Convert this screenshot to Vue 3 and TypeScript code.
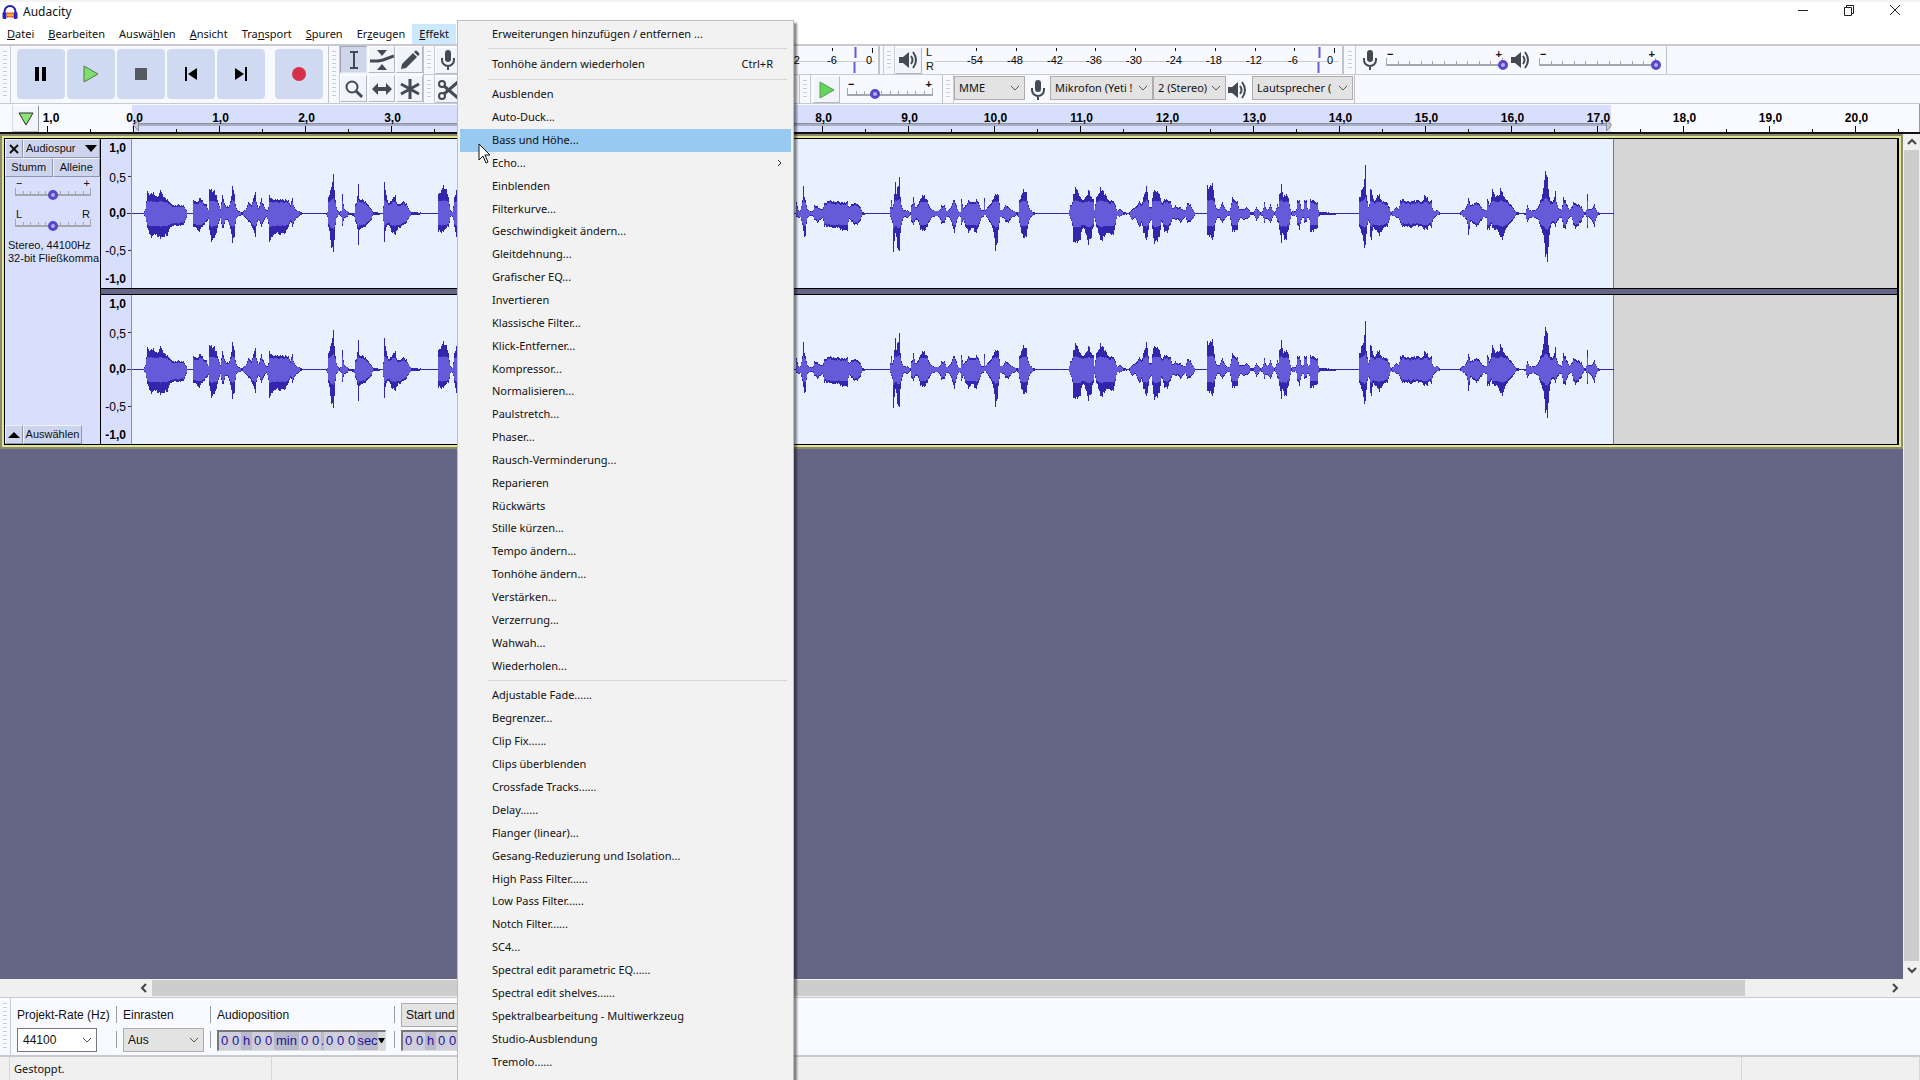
<script setup lang="ts">
interface MenuEntry {
  label: string
  shortcut?: string
  submenu?: boolean
  active?: boolean
}

const menus: [string, string, string][] = [
  ['', 'D', 'atei'],
  ['', 'B', 'earbeiten'],
  ['Auswä', 'h', 'len'],
  ['', 'A', 'nsicht'],
  ['Tra', 'n', 'sport'],
  ['', 'S', 'puren'],
  ['Er', 'z', 'eugen'],
  ['', 'E', 'ffekt'],
]

const toEntries = (labels: string[]): MenuEntry[] =>
  labels.map((label) => ({ label, submenu: label === 'Echo...', active: label === 'Bass und Höhe...' }))

const effectGroups: { name: string; entries: MenuEntry[] }[] = [
  { name: 'manage', entries: [{ label: 'Erweiterungen hinzufügen / entfernen ...' }] },
  { name: 'repeat', entries: [{ label: 'Tonhöhe ändern wiederholen', shortcut: 'Ctrl+R' }] },
  {
    name: 'builtin',
    entries: toEntries([
      'Ausblenden', 'Auto-Duck...', 'Bass und Höhe...', 'Echo...', 'Einblenden', 'Filterkurve...',
      'Geschwindigkeit ändern...', 'Gleitdehnung...', 'Grafischer EQ...', 'Invertieren',
      'Klassische Filter...', 'Klick-Entferner...', 'Kompressor...', 'Normalisieren...',
      'Paulstretch...', 'Phaser...', 'Rausch-Verminderung...', 'Reparieren', 'Rückwärts',
      'Stille kürzen...', 'Tempo ändern...', 'Tonhöhe ändern...', 'Verstärken...', 'Verzerrung...',
      'Wahwah...', 'Wiederholen...',
    ]),
  },
  {
    name: 'plugins',
    entries: toEntries([
      'Adjustable Fade......', 'Begrenzer...', 'Clip Fix......', 'Clips überblenden',
      'Crossfade Tracks......', 'Delay......', 'Flanger (linear)...',
      'Gesang-Reduzierung und Isolation...', 'High Pass Filter......', 'Low Pass Filter......',
      'Notch Filter......', 'SC4...', 'Spectral edit parametric EQ......',
      'Spectral edit shelves......', 'Spektralbearbeitung - Multiwerkzeug', 'Studio-Ausblendung',
      'Tremolo......', 'Vocal Remover......',
    ]),
  },
]

// Timeline: pixel position of a second, measured from the ruler's left edge.
const secondX = (s: number) => Math.round(94 + s * 86.12) + 0.5
const rulerMarks = Array.from({ length: 22 }, (_, i) => i - 1).map((s) => ({
  x: secondX(s),
  half: secondX(s + 0.5),
  label: `${Math.abs(s)},0`,
  labelX: s < 0 ? 12 : secondX(s) + 1,
}))

const meterMarks = [-54, -48, -42, -36, -30, -24, -18, -12, -6, 0].map((db, i) => ({
  db,
  x: Math.round(41 + i * 39.8),
}))

const scaleMarks = [
  { y: 9, label: '1,0', bold: true },
  { y: 39, label: '0,5', bold: false },
  { y: 74, label: '0,0', bold: true },
  { y: 112, label: '-0,5', bold: false },
  { y: 140, label: '-1,0', bold: true },
]

// Peak envelope as "position,up,down" in thirds of a pixel, per section of the clip.
const sections: [number, string][] = [
  [0, '396,1,1 415,3,3 430,3,3 435,15,12 441,67,45 452,62,75 460,64,65 470,50,70 481,72,78 492,50,70 500,45,68 512,30,40 520,25,38 535,28,38 550,25,35 557,10,15 560,3,3 578,3,3 580,42,40 590,35,50 598,47,57 605,42,40 612,30,35 618,28,25 624,12,18 627,75,50 633,75,85 642,70,75 648,55,60 655,30,30 660,15,15 665,55,45 669,45,45 675,25,20 685,20,25 692,50,60 697,82,90 702,60,70 706,20,20 712,8,10 725,5,5 735,12,15 745,35,25 752,25,35 758,45,50 764,65,70 770,25,25 775,15,20 782,47,40 790,25,25 797,10,10 803,10,20 808,57,85 815,45,70 825,45,62 840,45,65 855,43,60 865,42,40 870,25,25 875,47,40 880,25,30 888,10,15 895,8,10 905,3,3 935,3,3 975,2,2 982,5,10 985,50,40 990,70,80 994,80,105 998,120,115 1002,70,80 1007,20,15 1015,5,5 1024,8,10 1027,60,38 1030,15,18 1040,8,10 1045,3,3 1062,3,10 1066,30,25 1070,40,40 1074,90,95 1077,45,50 1085,45,45 1095,38,40 1105,25,30 1112,15,20 1117,5,5 1148,2,3 1152,95,85 1157,55,40 1165,30,35 1175,45,60 1184,55,65 1190,30,50 1200,30,45 1208,38,35 1217,32,30 1225,15,15 1235,4,4 1312,2,2 1315,60,55 1322,70,60 1330,85,55 1338,75,45 1345,45,40 1350,10,10 1357,5,10 1362,50,40 1367,70,70 1371,68,60 1380,20,20'],
  [780, '45,2,2 49,35,10 53,10,15 60,10,12 66,40,35 68,82,50 71,50,70 75,40,68 80,15,15 88,8,8 98,8,8 103,25,20 112,22,28 120,15,20 127,15,15 133,32,40 142,38,42 150,42,42 160,37,45 172,38,45 185,35,52 200,38,52 206,20,15 212,28,25 222,32,35 232,30,35 240,20,22 245,6,6 255,2,3 328,2,3 332,40,20 337,15,30 340,30,115 344,95,60 346,20,15 349,60,70 352,80,105 356,110,112 360,50,60 364,20,30 370,10,10 380,10,15 390,5,5 394,25,25 400,50,35 404,20,20 412,25,20 420,45,50 427,55,53 433,55,52 440,42,40 447,22,25 455,12,12 470,8,8 478,10,15 484,25,32 492,25,28 498,8,12 505,10,10 512,20,25 518,42,45 522,42,60 528,25,30 533,8,10 540,5,10 544,45,35 548,15,20 555,25,40 565,42,58 575,35,45 583,35,55 588,45,60 595,35,40 603,10,15 609,10,10 611,48,5 614,8,5 620,20,15 630,30,30 636,40,45 641,52,70 646,60,112 650,60,90 654,55,50 660,12,12 670,15,15 676,27,25 685,20,28 693,12,15 702,8,10 708,5,5 715,5,10 718,40,30 722,55,60 730,75,75 738,65,70 742,35,40 748,15,18 756,6,8 765,3,3 800,3,3 820,2,2 865,2,3 869,25,15 875,30,30 880,60,85 886,80,90 892,70,90 900,50,80 907,40,40 915,50,60 925,72,95 932,50,75 938,45,40 942,12,15 948,50,40 955,60,60 960,80,80 967,70,82 975,60,65 985,40,60 993,42,65 1000,38,65 1005,25,35 1010,8,8 1018,15,10 1030,4,4 1045,3,3 1055,15,20 1065,20,15 1073,30,35 1078,38,42 1084,28,30 1090,50,60 1097,82,80 1102,60,70 1107,20,30 1113,20,20 1118,65,75 1122,72,92 1130,68,85 1138,60,70 1144,30,20 1152,45,55 1160,42,60 1170,38,35 1177,15,15 1185,25,20 1193,18,18 1200,20,28 1208,12,18 1215,12,12 1222,32,30 1230,28,25 1238,12,15 1244,3,3 1278,2,3 1282,85,65 1286,80,70 1295,92,80 1300,70,70 1305,25,30 1310,15,15 1318,15,15 1325,35,30 1332,20,20 1340,8,8 1348,8,8 1356,50,55 1362,42,55 1370,38,50 1376,15,20'],
  [1240, '0,15,15 10,15,20 18,20,18 25,15,15 30,5,5 40,4,4 48,20,22 52,12,15 60,6,6 68,8,8 71,35,28 76,15,15 83,12,20 90,30,30 96,12,15 102,5,5 107,10,10 110,30,25 114,20,30 118,60,50 123,90,90 127,55,60 132,55,80 138,60,80 144,48,50 148,25,30 152,6,6 160,8,8 167,6,6 172,40,35 178,42,50 182,15,20 188,10,10 193,42,30 198,40,25 202,12,12 208,15,20 211,45,55 220,40,55 230,35,45 234,10,12 238,4,5 285,3,4 290,1,1 300,3,3 316,2,2 355,2,3 358,50,40 363,70,60 368,80,80 371,90,103 374,145,75 376,80,95 379,50,50 385,15,20 388,30,30 391,75,70 394,70,80 398,45,40 404,40,50 410,55,55 416,58,68 422,42,55 430,38,45 440,33,40 447,20,20 451,5,5 458,8,8 467,20,12 475,15,15 480,40,30 487,45,42 500,38,40 512,38,45 522,40,38 535,42,40 545,35,42 553,55,50 560,50,50 566,35,35 572,40,45 577,15,20 583,8,12 590,12,6 600,3,3 625,3,3 632,1,1 657,2,2 665,10,8 672,12,12 680,25,25 685,48,65 690,25,25 697,30,28 707,35,40 715,32,35 722,20,22 730,12,12 738,12,15 742,45,50 747,25,50 752,40,30 755,75,45 762,60,50 770,55,50 776,55,65 781,78,70 786,65,80 792,50,60 800,42,40 810,30,30 820,15,18 828,5,5 845,2,2 855,3,5 860,25,25 867,12,15 875,10,12 885,12,15 893,20,20 900,40,40 907,60,60 912,100,90 916,128,130 920,110,145 925,70,100 928,45,50 935,35,30 940,40,30 944,68,40 948,35,30 956,15,15 964,10,15 969,50,45 974,40,48 980,25,25 988,10,12 994,20,12 999,35,35 1005,32,48 1013,28,38 1022,22,25 1030,8,8 1036,3,3 1038,10,10 1040,60,45 1042,15,10 1048,15,15 1055,15,25 1062,28,40 1067,10,15 1074,4,4 1092,2,2 1119,1,1'],
]

const CENTER = 74
const CLIP_START = 132

function buildWave(): { peak: string; rms: string } {
  const points = sections.flatMap(([offset, data]) =>
    data.split(' ').map((triple) => {
      const [x, up, down] = triple.split(',').map(Number)
      return { x: offset + x / 3 - CLIP_START, up: up / 3, down: down / 3 }
    }),
  )
  const height = (v: number) => Math.round(Math.max(0, v - 0.6))
  let peak = ''
  let rms = ''
  let i = 0
  const last = points[points.length - 1].x
  for (let x = 0; x <= last; x++) {
    while (i < points.length - 2 && points[i + 1].x < x) i++
    const a = points[i]
    const b = points[i + 1]
    const t = Math.min(1, Math.max(0, (x - a.x) / (b.x - a.x || 1)))
    const ripple = 0.07 * Math.sin(x * 2.7) * Math.cos(x * 1.3)
    let up = (a.up + (b.up - a.up) * t) * (0.94 + ripple)
    let down = (a.down + (b.down - a.down) * t) * (0.94 - ripple)
    // A traced point inside this column keeps its full height, so narrow spikes survive.
    for (const p of [a, b]) {
      if (Math.abs(p.x - x) <= 0.5) {
        up = Math.max(up, p.up)
        down = Math.max(down, p.down)
      }
    }
    peak += `M${x + 0.5} ${CENTER - height(up)}V${CENTER + 1 + height(down)}`
    const soft = (v: number) => Math.min(0.8 * v, 9 + 0.16 * v)
    if (up + down > 4) {
      rms += `M${x + 0.5} ${CENTER - height(soft(up))}V${CENTER + 1 + height(soft(down))}`
    }
  }
  return { peak, rms }
}

const wave = buildWave()
const channels = ['links', 'rechts']

const trackSliders = [
  { label: 'Lautstärke', low: '−', high: '+', value: 50 },
  { label: 'Balance', low: 'L', high: 'R', value: 50 },
]
const timeParts = [
  { text: '00', kind: 'digits' },
  { text: 'h', kind: 'hour' },
  { text: '00', kind: 'digits' },
  { text: 'min', kind: 'minute' },
  { text: '00', kind: 'digits' },
  { text: '.', kind: 'point' },
  { text: '000', kind: 'digits' },
  { text: 'sec', kind: 'second' },
]
const glyphs = (p: { text: string; kind: string }) => (p.kind === 'digits' ? p.text.split('') : [p.text])
</script>

<template>
  <div class="app">
    <header class="titlebar">
      <svg class="logo" width="16" height="16" viewBox="0 0 16 16">
        <path d="M2.500 11V7.500a5.500 5.500 0 0 1 11 0V11" fill="none" stroke="#1d1aa8" stroke-width="2" />
        <rect x="0.500" y="8" width="4" height="7" rx="1.500" fill="#2a24c4" />
        <rect x="11.500" y="8" width="4" height="7" rx="1.500" fill="#2a24c4" />
        <path d="M4.500 9l1.500-1 1 1.500 1-2 1 2 1-1.500 1.500 1v4l-1.500 1-1-1.500-1 1.500-1-1.500-1 1.500-1.500-1z" fill="#e8542a" />
        <path d="M5 11h6" stroke="#f5b02c" stroke-width="2" />
      </svg>
      <span class="title">Audacity</span>
      <div class="window-buttons">
        <button aria-label="Minimieren"><svg width="12" height="12"><path d="M1 6.500h10" stroke="#222" /></svg></button>
        <button aria-label="Wiederherstellen">
          <svg width="12" height="12"><path d="M1.500 3.500h7v8h-7zM3.500 3.500v-2h7v8h-2" fill="none" stroke="#222" /></svg>
        </button>
        <button aria-label="Schließen"><svg width="12" height="12"><path d="M1 1l10 10M11 1L1 11" stroke="#222" /></svg></button>
      </div>
    </header>

    <nav class="menubar">
      <button v-for="m in menus" :key="m[1] + m[2]" :class="{ open: m[2] === 'ffekt' }">{{ m[0] }}<u>{{ m[1] }}</u>{{ m[2] }}</button>
    </nav>

    <div class="toolbars">
      <div class="bar transport">
        <i class="grip" />
        <div class="transport-buttons">
          <button class="big" aria-label="Pause"><svg width="14" height="16"><path d="M1 1h4v14H1zM8 1h4v14H8z" /></svg></button>
          <button class="big" aria-label="Wiedergabe">
            <svg width="18" height="18"><path d="M2 1l14 8L2 17z" fill="#7ee06c" stroke="#53794e" /></svg>
          </button>
          <button class="big" aria-label="Stopp"><svg width="12" height="12"><path d="M0 0h12v12H0z" fill="#555a60" /></svg></button>
          <button class="big" aria-label="Zum Anfang"><svg width="14" height="14"><path d="M1 0h2v14H1zM13 1v12L4 7z" /></svg></button>
          <button class="big" aria-label="Zum Ende"><svg width="14" height="14"><path d="M11 0h2v14h-2zM1 1v12l9-6z" /></svg></button>
          <button class="big record" aria-label="Aufnahme"><svg width="14" height="14"><circle cx="7" cy="7" r="7" fill="#d5314a" /></svg></button>
        </div>
      </div>

      <div class="bar tools">
        <i class="grip" />
        <div class="tool-grid">
          <button class="tool pressed" aria-label="Auswahl">
            <svg width="20" height="20"><path d="M6 2h8M6 18h8M10 2v16" fill="none" stroke="#444a52" stroke-width="2" /></svg>
          </button>
          <button class="tool" aria-label="Hüllkurve">
            <svg width="24" height="20"><path d="M7 0h10l-5 6zM7 20h10l-5-6z" fill="#444a52" /><path d="M0 11h8l5-1 11-4" fill="none" stroke="#444a52" stroke-width="3" /></svg>
          </button>
          <button class="tool" aria-label="Zeichnen">
            <svg width="20" height="20"><path d="M1 19l1-5L13 3l4 4L6 18zM14 2l1-1q1-1 2 0l2 2q1 1 0 2l-1 1z" fill="#444a52" /></svg>
          </button>
          <button class="tool" aria-label="Zoom">
            <svg width="20" height="20"><circle cx="8" cy="8" r="5.500" fill="none" stroke="#444a52" stroke-width="2" /><path d="M12 12l6 6" stroke="#444a52" stroke-width="3" /></svg>
          </button>
          <button class="tool" aria-label="Verschieben">
            <svg width="22" height="20"><path d="M1 10l6-6v4h8V4l6 6-6 6v-4H7v4z" fill="#444a52" /></svg>
          </button>
          <button class="tool" aria-label="Multiwerkzeug">
            <svg width="20" height="20"><path d="M10 0v20M1 5l18 10M1 15L19 5" stroke="#444a52" stroke-width="3" /></svg>
          </button>
        </div>
      </div>

      <div class="rows">
        <div class="row">
          <div class="bar record-meter">
            <i class="grip" />
            <button class="tool" aria-label="Aufnahmepegel">
              <svg width="16" height="20"><rect x="5" y="0" width="6" height="12" rx="3" fill="#444a52" /><path d="M2 8v2a6 6 0 0 0 12 0V8M8 15v5" fill="none" stroke="#444a52" stroke-width="2" /></svg>
            </button>
            <svg class="meter" width="414" height="28">
              <path d="M0 15.500h414" stroke="#c9cbd6" />
              <path d="M371.500 2v3M411.500 2v5" stroke="#111" />
              <path d="M394.500 1v11M393.500 16v11" stroke="#6b5bd0" stroke-width="2" />
              <text x="331" y="18" text-anchor="middle">-12</text>
              <text x="371" y="18" text-anchor="middle">-6</text>
              <text x="408" y="18" text-anchor="middle">0</text>
            </svg>
          </div>
          <div class="bar play-meter">
            <i class="grip" />
            <button class="tool" aria-label="Wiedergabepegel">
              <svg width="20" height="20"><path d="M0 7h4l6-5v16l-6-5H0z" fill="#444a52" /><path d="M12 6q3 4 0 8M14 2q6 8 0 16" fill="none" stroke="#444a52" stroke-width="2" /></svg>
            </button>
            <div class="lr"><span>L</span><span>R</span></div>
            <svg class="meter" width="404" height="28">
              <path d="M0 15.500h404" stroke="#c9cbd6" />
              <template v-for="m in meterMarks" :key="m.db">
                <path :d="`M${m.x + 0.5} 2v${m.db === 0 ? 5 : 3}`" stroke="#111" />
                <text :x="m.db === 0 ? m.x - 4 : m.x - 1" y="18" text-anchor="middle">{{ m.db }}</text>
              </template>
              <path d="M384.500 1v11M383.500 16v11" stroke="#6b5bd0" stroke-width="2" />
            </svg>
          </div>
          <div class="bar mixer">
            <i class="grip" />
            <svg class="mixer-icon" width="16" height="20"><rect x="5" y="0" width="6" height="12" rx="3" fill="#444a52" /><path d="M2 8v2a6 6 0 0 0 12 0V8M8 15v5" fill="none" stroke="#444a52" stroke-width="2" /></svg>
            <label class="slider wide">
              <span class="ends"><b>−</b><b>+</b></span>
              <span class="ticks"><i v-for="n in 11" :key="n" /></span>
              <input type="range" aria-label="Aufnahmelautstärke" value="100" />
            </label>
            <svg class="mixer-icon" width="20" height="20"><path d="M0 7h4l6-5v16l-6-5H0z" fill="#444a52" /><path d="M12 6q3 4 0 8M14 2q6 8 0 16" fill="none" stroke="#444a52" stroke-width="2" /></svg>
            <label class="slider wide">
              <span class="ends"><b>−</b><b>+</b></span>
              <span class="ticks"><i v-for="n in 11" :key="n" /></span>
              <input type="range" aria-label="Wiedergabelautstärke" value="100" />
            </label>
          </div>
        </div>
        <div class="row">
          <div class="bar edit">
            <i class="grip" />
            <button class="tool" aria-label="Ausschneiden">
              <svg width="20" height="20"><circle cx="4" cy="4" r="3" fill="none" stroke="#444a52" stroke-width="2" /><circle cx="4" cy="16" r="3" fill="none" stroke="#444a52" stroke-width="2" /><path d="M6 6l14 12M6 14L20 2" stroke="#444a52" stroke-width="3" /></svg>
            </button>
          </div>
          <div class="bar speed">
            <i class="grip" />
            <button class="tool" aria-label="Wiedergabe mit Tempo">
              <svg width="18" height="18"><path d="M2 1l14 8L2 17z" fill="#62d65a" stroke="#5b9a56" /></svg>
            </button>
            <label class="slider speed-slider">
              <span class="ends"><b>−</b><b>+</b></span>
              <span class="ticks"><i v-for="n in 11" :key="n" /></span>
              <input type="range" aria-label="Wiedergabegeschwindigkeit" value="33" />
            </label>
          </div>
          <div class="bar devices">
            <i class="grip" />
            <span class="combo host"><select aria-label="Audio-Host"><option>MME</option></select><svg width="10" height="6"><path d="M1 1l4 4 4-4" fill="none" stroke="#555" /></svg></span>
            <svg class="mic" width="16" height="20"><rect x="5" y="0" width="6" height="12" rx="3" fill="#444a52" /><path d="M2 8v2a6 6 0 0 0 12 0V8M8 15v5" fill="none" stroke="#444a52" stroke-width="2" /></svg>
            <span class="combo input"><select aria-label="Aufnahmegerät"><option>Mikrofon (Yeti !</option></select><svg width="10" height="6"><path d="M1 1l4 4 4-4" fill="none" stroke="#555" /></svg></span>
            <span class="combo chans"><select aria-label="Aufnahmekanäle"><option>2 (Stereo)</option></select><svg width="10" height="6"><path d="M1 1l4 4 4-4" fill="none" stroke="#555" /></svg></span>
            <svg class="speaker" width="20" height="20"><path d="M0 7h4l6-5v16l-6-5H0z" fill="#444a52" /><path d="M12 6q3 4 0 8M14 2q6 8 0 16" fill="none" stroke="#444a52" stroke-width="2" /></svg>
            <span class="combo output"><select aria-label="Wiedergabegerät"><option>Lautsprecher (</option></select><svg width="10" height="6"><path d="M1 1l4 4 4-4" fill="none" stroke="#555" /></svg></span>
          </div>
        </div>
      </div>
    </div>

    <div class="timeline">
      <button class="pin" aria-label="Abspielkopf"><svg width="16" height="14"><path d="M1 1h14L8 13z" fill="#8be27c" stroke="#2b2f2b" /></svg></button>
      <svg class="ruler" height="28">
        <rect x="93" y="1" width="1479" height="27" fill="#d7dffd" />
        <rect x="94" y="19" width="1478" height="3" fill="#a9afc2" />
        <path d="M94 19.500h1478" stroke="#8b90a3" />
        <path d="M99.500 16v11l-5-6zM1567.500 16v11l5-6z" fill="#c6c8cf" stroke="#8c8f98" />
        <template v-for="m in rulerMarks" :key="m.x">
          <path :d="`M${m.x} 22v6M${m.half} 25v3`" stroke="#000" />
          <text :x="m.labelX" y="18" text-anchor="middle">{{ m.label }}</text>
        </template>
      </svg>
    </div>

    <main class="workspace">
      <div class="canvas">
        <section class="track">
          <div class="track-glow">
            <div class="track-body">
              <aside class="panel">
                <div class="panel-row">
                  <button class="flat close" aria-label="Spur schließen"><svg width="10" height="10"><path d="M1 1l8 8M9 1L1 9" stroke="#111" stroke-width="2" /></svg></button>
                  <button class="flat name">Audiospur <svg width="12" height="7"><path d="M0 0h12L6 7z" /></svg></button>
                </div>
                <div class="panel-row">
                  <button class="flat half">Stumm</button>
                  <button class="flat half">Alleine</button>
                </div>
                <label v-for="s in trackSliders" :key="s.label" class="slider track-slider">
                  <span class="ends"><span>{{ s.low }}</span><span>{{ s.high }}</span></span>
                  <span class="ticks"><i v-for="n in 11" :key="n" /></span>
                  <input type="range" :aria-label="s.label" :value="s.value" />
                </label>
                <p class="format">Stereo, 44100Hz<br />32-bit Fließkomma</p>
                <div class="panel-row foot">
                  <button class="flat close" aria-label="Spur einklappen"><svg width="12" height="6"><path d="M0 6h12L6 0z" /></svg></button>
                  <button class="flat pick">Auswählen</button>
                </div>
              </aside>
              <div class="channels">
                <div v-for="c in channels" :key="c" class="channel">
                  <svg class="scale" width="31" height="149">
                    <text v-for="m in scaleMarks" :key="m.label" x="25" :y="m.y + 4" text-anchor="end" :class="{ bold: m.bold }">{{ m.label }}</text>
                    <path d="M27 37.500h4M26 74.500h5M27 111.500h4" stroke="#333" />
                    <path d="M30.500 0v149" stroke="#8a8fa8" />
                  </svg>
                  <svg class="wave" height="149">
                    <rect width="1481" height="149" fill="#e9f0fe" />
                    <path d="M1481.500 0v149" stroke="#777" />
                    <path :d="wave.peak" stroke="#3326ad" shape-rendering="crispEdges" />
                    <path :d="wave.rms" stroke="#655bd8" shape-rendering="crispEdges" />
                  </svg>
                </div>
              </div>
            </div>
          </div>
        </section>
      </div>
      <div class="vscroll">
        <svg width="16" height="16"><path d="M4 10l4-4 4 4" fill="none" stroke="#444" stroke-width="2" /></svg>
        <div class="thumb" />
        <svg width="16" height="18"><path d="M4 7l4 4 4-4" fill="none" stroke="#444" stroke-width="2" /></svg>
      </div>
    </main>

    <div class="hscroll">
      <svg width="16" height="16"><path d="M10 4L6 8l4 4" fill="none" stroke="#444" stroke-width="2" /></svg>
      <div class="lane"><div class="thumb" /></div>
      <svg width="16" height="16"><path d="M6 4l4 4-4 4" fill="none" stroke="#444" stroke-width="2" /></svg>
    </div>

    <div class="selection-bar">
      <i class="grip" />
      <div class="field rate">
        <label for="rate">Projekt-Rate (Hz)</label>
        <span class="combo white"><input id="rate" value="44100" /><svg width="10" height="6"><path d="M1 1l4 4 4-4" fill="none" stroke="#555" /></svg></span>
      </div>
      <div class="rule"><i /><i /></div>
      <div class="field snap">
        <label for="snap">Einrasten</label>
        <span class="combo"><select id="snap"><option>Aus</option></select><svg width="10" height="6"><path d="M1 1l4 4 4-4" fill="none" stroke="#555" /></svg></span>
      </div>
      <div class="rule"><i /><i /></div>
      <div class="field position">
        <span class="caption">Audioposition</span>
        <div class="time">
          <span v-for="(p, i) in timeParts" :key="i" :class="p.kind"><b v-for="(ch, j) in glyphs(p)" :key="j">{{ ch }}</b></span>
          <button aria-label="Format"><svg width="7" height="5"><path d="M0 0h7L4 5H3z" /></svg></button>
        </div>
      </div>
      <div class="rule"><i /><i /></div>
      <div class="field range">
        <span class="combo"><select aria-label="Auswahlart"><option>Start und</option></select></span>
        <div class="time">
          <span v-for="(p, i) in timeParts.slice(0, 3)" :key="i" :class="p.kind"><b v-for="(ch, j) in glyphs(p)" :key="j">{{ ch }}</b></span>
        </div>
      </div>
    </div>

    <footer class="status">
      <span class="cell spacer" />
      <span class="cell state">Gestoppt.</span>
      <span class="cell message" />
      <span class="cell last" />
    </footer>

    <div class="effect-menu" role="menu">
      <div v-for="g in effectGroups" :key="g.name" class="group" :class="g.name">
        <button v-for="e in g.entries" :key="e.label" role="menuitem" :class="{ active: e.active }">
          <span>{{ e.label }}</span>
          <span v-if="e.shortcut" class="shortcut">{{ e.shortcut }}</span>
          <svg v-if="e.submenu" class="arrow" width="6" height="8"><path d="M1 1l3 3-3 3" fill="none" stroke="#333" /></svg>
        </button>
      </div>
    </div>
    <svg class="pointer" width="14" height="21"><path d="M1 1v16l4-4 3 7 2-1-3-7h5z" fill="#fff" stroke="#111" /></svg>
  </div>
</template>

<style>
body {
  margin: 0;
}
</style>

<style scoped>
.app {
  --ui: 'Noto Sans', 'Open Sans', sans-serif;
  --arial: 'Liberation Sans', Arial, sans-serif;
  position: relative;
  display: flex;
  flex-direction: column;
  height: 100vh;
  overflow: hidden;
  background: #fff;
  color: #111;
  font: 11px/16px var(--ui);
}
.app * {
  box-sizing: border-box;
}
svg {
  display: block;
  flex: none;
}
button,
select,
input {
  margin: 0;
  padding: 0;
  border: 0;
  border-radius: 0;
  background: none;
  color: inherit;
  font: inherit;
}
button {
  display: flex;
  align-items: center;
  justify-content: center;
  white-space: pre;
}

.titlebar {
  display: flex;
  align-items: center;
  height: 24px;
  padding: 0 0 3px 2px;
  border-top: 2px solid #f4f4f4;
  font-size: 12px;
}
.title {
  flex: 1;
  margin-left: 5px;
}
.window-buttons {
  display: flex;
  align-self: flex-start;
  margin-right: 2px;
}
.window-buttons button {
  width: 46px;
  height: 16px;
}

.menubar {
  display: flex;
  height: 20px;
}
.menubar button {
  display: block;
  padding: 0 7px;
  line-height: 20px;
}
.menubar .open {
  background: #cce8ff;
}

.toolbars {
  display: flex;
  height: 60px;
  border-top: 2px solid #c8cace;
  border-bottom: 1px solid #c8cace;
  background: #f7f9fe;
}
.bar {
  display: flex;
  align-items: center;
  flex: none;
  border-right: 1px solid #c0c3cc;
}
.grip {
  flex: none;
  align-self: stretch;
  width: 11px;
  border-right: 1px solid #c8cace;
  background: repeating-linear-gradient(#c9ccd4 0 1px, #fafbfe 1px 4px) content-box;
  padding: 5px 3px;
}
.transport {
  width: 329px;
}
.transport-buttons {
  display: flex;
  align-self: flex-start;
  gap: 2px;
  margin: 3px 0 0 6px;
}
.big {
  width: 48px;
  height: 50px;
  border-radius: 4px;
  background: #d0d9f2;
}
.big.record {
  margin-left: 8px;
}
.tools {
  width: 95px;
}
.tool-grid {
  display: grid;
  grid-template-columns: repeat(3, 28px);
  grid-auto-rows: 28px;
  gap: 1px 0;
}
.tool {
  flex: none;
  width: 27px;
  height: 27px;
  border: 1px solid;
  border-color: #fff #b4b8c4 #b4b8c4 #fff;
  background: #f1f4fb;
}
.tool.pressed {
  border-color: #9ea3b5 #e0e4f0 #e0e4f0 #9ea3b5;
  background: #d0d6ea;
}
.rows {
  flex: 1;
  min-width: 0;
}
.row {
  display: flex;
  height: 29px;
}
.row:first-child {
  border-bottom: 1px solid #c8cace;
}
.meter text {
  font: 11px var(--arial);
}
.record-meter {
  width: 456px;
  border-right-width: 2px;
}
.record-meter .tool,
.edit .tool {
  width: 26px;
}
.play-meter {
  width: 461px;
  margin-left: 3px;
  border-left: 1px solid #c8cace;
  border-right-width: 2px;
}
.lr {
  display: flex;
  flex-direction: column;
  width: 13px;
  padding: 0 0 2px 4px;
  font: 11px/14px var(--arial);
}
.mixer {
  gap: 3px;
  margin-left: 1px;
  width: 322px;
}
.mixer .mixer-icon {
  margin-left: 3px;
}
.mixer .slider + .mixer-icon {
  margin-left: 0;
}
.edit {
  width: 376px;
}
.speed {
  width: 143px;
  gap: 2px;
}
.devices {
  width: 412px;
}
.devices .combo {
  align-self: flex-start;
  margin-top: 1px;
}
.host {
  width: 71px;
}
.mic {
  margin: 0 4px 0 5px;
}
.input {
  width: 103px;
}
.chans {
  width: 73px;
}
.speaker {
  margin: 0 4px 0 2px;
}
.output {
  width: 101px;
}
.combo {
  position: relative;
  display: block;
  flex: none;
  height: 24px;
  border: 1px solid #adadad;
  background: #e3e3e3;
}
.combo select,
.combo input {
  display: block;
  width: 100%;
  height: 100%;
  padding: 0 16px 0 4px;
  appearance: none;
  outline: none;
}
.combo svg {
  position: absolute;
  right: 4px;
  top: 8px;
  pointer-events: none;
}

.slider {
  display: grid;
  flex: none;
  width: 96px;
  grid-template-rows: 9px 13px;
}
.slider > * {
  grid-column: 1;
}
.slider.wide {
  width: 127px;
}
.ends {
  display: flex;
  justify-content: space-between;
  padding: 0 6px;
  font: 11px/10px var(--arial);
}
.ticks {
  grid-row: 2;
  display: flex;
  align-self: start;
  justify-content: space-between;
  height: 8px;
  margin: 0 5px;
  border-bottom: 2px solid #a5a7ad;
}
.ticks i {
  align-self: flex-end;
  width: 1px;
  height: 3px;
  background: #a5a7ad;
}
.ticks i:first-child,
.ticks i:last-child {
  height: 6px;
}
.slider input {
  grid-row: 2;
  width: 100%;
  height: 13px;
  appearance: none;
}
.slider input::-webkit-slider-thumb {
  appearance: none;
  width: 10px;
  height: 10px;
  border: 3px solid #5646c8;
  border-radius: 50%;
  background: #b6aef0;
}

.timeline {
  display: flex;
  height: 30px;
  border-bottom: 2px solid #111;
  background: #f9faff;
}
.pin {
  flex: none;
  width: 27px;
  height: 27px;
  margin: 1px 0 0 12px;
  border: 1px solid;
  border-color: #fff #8f939c #b4b8c4 #d8dbe4;
  background: #f4f6fc;
}
.ruler {
  flex: 1;
  min-width: 0;
  border-right: 1px solid #999;
}
.ruler text {
  font: bold 12px var(--arial);
}

.workspace {
  display: flex;
  flex: 1;
  min-height: 0;
}
.canvas {
  flex: 1;
  min-width: 0;
  background: #656585;
}
.track {
  padding: 2px;
  background: #8b8b70;
}
.track-glow {
  padding: 2px;
  background: #e3e592;
}
.track-body {
  display: flex;
  height: 307px;
  border: 1px solid #000;
  border-right-width: 2px;
}
.panel {
  display: flex;
  flex: none;
  flex-direction: column;
  width: 96px;
  border-right: 1px solid #000;
  background: #d7dffd;
  font: 11px/13px var(--arial);
}
.panel-row {
  display: flex;
  height: 19px;
}
.flat {
  border: 1px solid;
  border-color: #f0f3ff #8f96ae #8f96ae #f0f3ff;
  background: #cdd5ee;
}
.flat.close {
  width: 18px;
}
.flat.name {
  flex: 1;
  justify-content: space-between;
  padding: 0 2px;
}
.flat.half {
  flex: 1;
}
.flat.pick {
  width: 59px;
  overflow: hidden;
}
.track-slider {
  width: 86px;
  margin: 1px 0 7px 5px;
  grid-template-rows: 10px 13px;
}
.format {
  margin: 0 0 0 3px;
  white-space: nowrap;
}
.foot {
  margin-top: auto;
}
.channels {
  display: flex;
  flex: 1;
  flex-direction: column;
  min-width: 0;
  background: #656585;
}
.channel {
  display: flex;
  height: 150px;
  border-bottom: 1px solid #000;
  background: #d6d6d6;
}
.channel + .channel {
  margin-top: 5px;
  border-top: 1px solid #000;
  border-bottom: 0;
}
.scale {
  background: #d7dffd;
}
.scale text {
  font: 12px var(--arial);
}
.scale text.bold {
  font-weight: bold;
}
.wave {
  flex: 1;
  min-width: 0;
}

.vscroll {
  display: flex;
  flex: none;
  flex-direction: column;
  align-items: center;
  width: 17px;
  background: #f0f0f0;
}
.vscroll .thumb {
  flex: 1;
  width: 15px;
  background: #cdcdcd;
}
.hscroll {
  display: flex;
  align-items: center;
  height: 18px;
  padding: 0 17px 0 136px;
  background: #f0f0f0;
}
.lane {
  flex: 1;
  height: 16px;
}
.lane .thumb {
  width: 91.8%;
  height: 100%;
  background: #cdcdcd;
}

.selection-bar {
  display: flex;
  height: 60px;
  border-top: 1px solid #c8cace;
  border-bottom: 2px solid #c8cace;
  background: #f9faff;
  font: 12px/16px var(--arial);
}
.field {
  display: grid;
  flex: none;
  grid-template-rows: 24px 24px;
  align-items: center;
  gap: 1px;
  padding-top: 5px;
  align-content: start;
}
.rate {
  width: 93px;
  margin-left: 6px;
  white-space: nowrap;
}
.rate .combo {
  width: 80px;
}
.combo.white {
  border-color: #777;
  background: #fff;
}
.combo.white input {
  padding-left: 5px;
}
.snap {
  width: 81px;
}
.range {
  width: 170px;
}
.rule {
  display: grid;
  flex: none;
  grid-template-rows: 17px 17px;
  gap: 8px;
  width: 13px;
  padding: 8px 0 0 6px;
}
.rule i {
  width: 1px;
  background: #9a9ca3;
}
.position {
  width: 171px;
}
.time {
  display: flex;
  align-items: center;
  width: 169px;
  height: 21px;
  border: 1px solid;
  border-color: #777 #ddd #ddd #777;
  border-width: 2px 1px 1px 2px;
  background: #b9b9cb;
  color: #22149c;
  font-size: 13px;
}
.time span {
  display: flex;
  flex: none;
  justify-content: center;
  height: 18px;
  line-height: 18px;
}
.time b {
  font-weight: normal;
  text-align: center;
}
.digits {
  background: #cfcfdb;
}
.digits b {
  width: 11px;
}
.hour {
  width: 11px;
}
.minute {
  width: 25px;
}
.point {
  width: 3px;
}
.second {
  width: 21px;
}
.time button {
  flex: 1;
  height: 18px;
  background: #d8d8d8;
  color: #000;
}

.status {
  display: flex;
  height: 23px;
  background: #f0f0f0;
}
.cell {
  border-right: 1px solid #d7d7d7;
  line-height: 24px;
}
.spacer {
  width: 10px;
}
.state {
  width: 262px;
  padding-left: 4px;
}
.message {
  flex: 1;
}
.last {
  width: 178px;
}

.effect-menu {
  position: absolute;
  left: 457px;
  top: 20px;
  width: 337px;
  padding: 1px 2px;
  border: 1px solid #bdbdbd;
  background: #f2f2f2;
  box-shadow: 3px 3px 2px rgba(0, 0, 0, 0.45);
}
.group {
  display: grid;
  grid-auto-rows: 1fr;
}
.group + .group {
  position: relative;
  margin-top: 7px;
}
.group + .group::before {
  content: '';
  position: absolute;
  left: 28px;
  right: 4px;
  top: -4px;
  height: 1px;
  background: #d5d5d5;
}
.manage,
.repeat {
  height: 23px;
}
.group + .builtin {
  height: 594px;
  margin-top: 8px;
}
.plugins {
  height: 412px;
}
.group button {
  justify-content: flex-start;
  min-height: 0;
  padding: 0 18px 0 32px;
}
.group .active {
  background: #97c9f1;
}
.shortcut {
  margin-left: auto;
}
.arrow {
  margin: 0 -10px 0 auto;
}
.pointer {
  position: absolute;
  left: 478px;
  top: 143px;
}
</style>
